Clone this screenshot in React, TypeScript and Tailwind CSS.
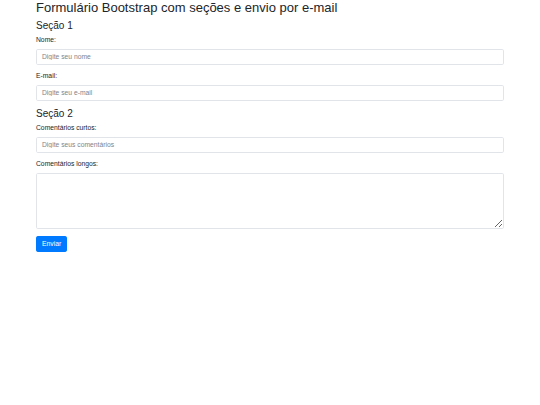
import React from 'react';

const font = { fontFamily: '"Liberation Sans", Arial, sans-serif' };

const Field = ({ label, placeholder, type = 'text' }: { label: string; placeholder: string; type?: string }) => (
  <div className="mb-[6.75px]">
    <label className="block mb-[3.4px] text-[6.75px] leading-[10.1px] text-[#212529]">{label}</label>
    <input
      type={type}
      placeholder={placeholder}
      className="block w-full h-[16px] px-[5px] py-[2.5px] text-[6.75px] text-[#495057] bg-white border border-[#e1e4e8] rounded-[1.7px] outline-none placeholder:text-[#7d858c]"
    />
  </div>
);

export default function App() {
  return (
    <div className="min-h-[405px] bg-white text-[#212529]" style={font}>
      <div className="px-[36px]">
        <h2 className="text-[13px] leading-[16.2px] font-normal mb-[3.4px]">
          Formulário Bootstrap com seções e envio por e-mail
        </h2>
        <form onSubmit={(e) => e.preventDefault()}>
          <h4 className="text-[10px] leading-[12.15px] font-normal mb-[3.4px]">Seção 1</h4>
          <Field label="Nome:" placeholder="Digite seu nome" />
          <Field label="E-mail:" placeholder="Digite seu e-mail" type="email" />

          <h4 className="text-[10px] leading-[12.15px] font-normal mb-[3.4px]">Seção 2</h4>
          <Field label="Comentários curtos:" placeholder="Digite seus comentários" />
          <div className="mb-[6.75px]">
            <label className="block mb-[3.4px] text-[6.75px] leading-[10.1px]">Comentários longos:</label>
            <textarea
              rows={5}
              className="block w-full h-[56px] px-[5px] py-[2.5px] text-[6.75px] bg-white border border-[#e1e4e8] rounded-[1.7px] outline-none"
            />
          </div>
          <button
            type="submit"
            className="block h-[16px] px-[5px] text-[6.75px] leading-[10px] text-white bg-[#007bff] border border-[#007bff] rounded-[1.7px]"
          >
            Enviar
          </button>
        </form>
      </div>
    </div>
  );
}
